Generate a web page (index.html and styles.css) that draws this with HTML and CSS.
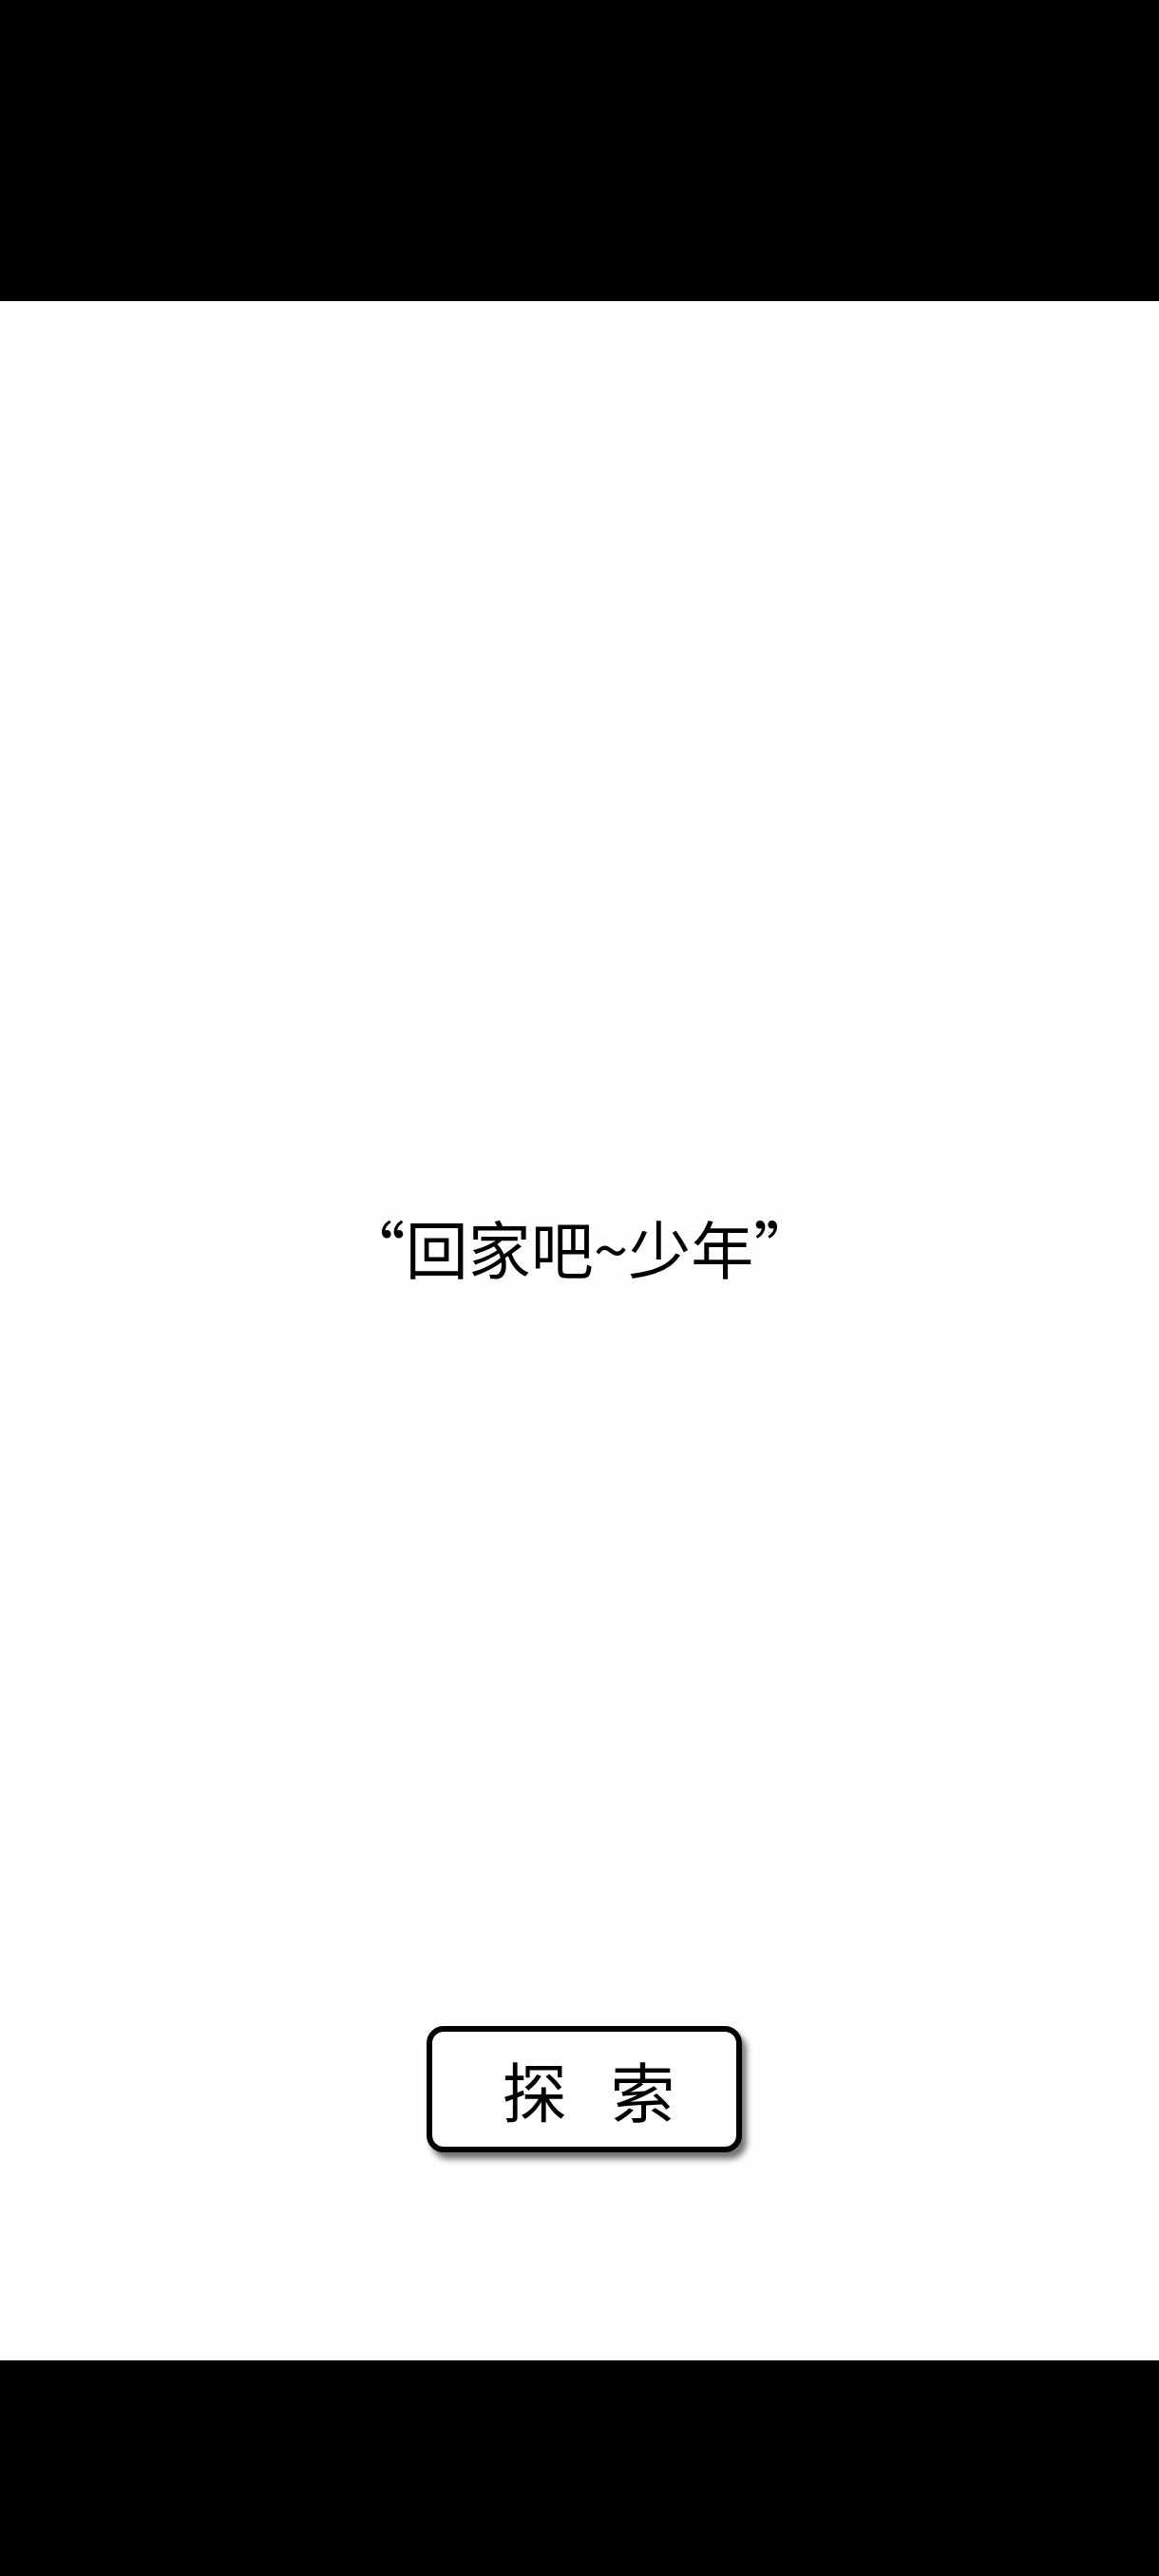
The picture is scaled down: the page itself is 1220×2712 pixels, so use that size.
FILE: index.html
```html
<!DOCTYPE html>
<html lang="zh-CN">
<head>
<meta charset="utf-8">
<title>回家吧</title>
<link rel="stylesheet" href="styles.css">
</head>
<body>
<div class="bar bar-top"></div>
<main class="stage">
  <p class="motto">“回家吧~少年”</p>
  <button class="explore" type="button"><span>探</span><span>索</span></button>
</main>
<div class="bar bar-bottom"></div>
</body>
</html>
```

FILE: styles.css
```css
html, body {
  margin: 0;
  padding: 0;
  background: #ffffff;
}
body {
  width: 1220px;
  height: 2712px;
  display: flex;
  flex-direction: column;
  font-family: "Noto Sans CJK SC", "Noto Sans", sans-serif;
  color: #000;
}
.bar {
  background: #000;
  flex: none;
}
.bar-top { height: 317px; }
.bar-bottom { height: 227px; }
.stage {
  flex: 1;
  display: flex;
  flex-direction: column;
  align-items: center;
  background: #fefefe;
}
.motto {
  margin: 962px 0 0;
  font-size: 66px;
  line-height: 66px;
  height: 66px;
  white-space: nowrap;
}
.explore {
  margin: 788px 0 0 10px;
  width: 332px;
  height: 133px;
  box-sizing: border-box;
  border: 6px solid #000;
  border-radius: 18px;
  background: #fff;
  box-shadow: 5px 7px 6px rgba(0, 0, 0, 0.55);
  display: flex;
  align-items: center;
  justify-content: center;
  gap: 46px;
  padding: 0 0 0 9px;
  font-family: "Noto Sans CJK SC", "Noto Sans", sans-serif;
  font-size: 68px;
  line-height: 68px;
  color: #000;
}
```
